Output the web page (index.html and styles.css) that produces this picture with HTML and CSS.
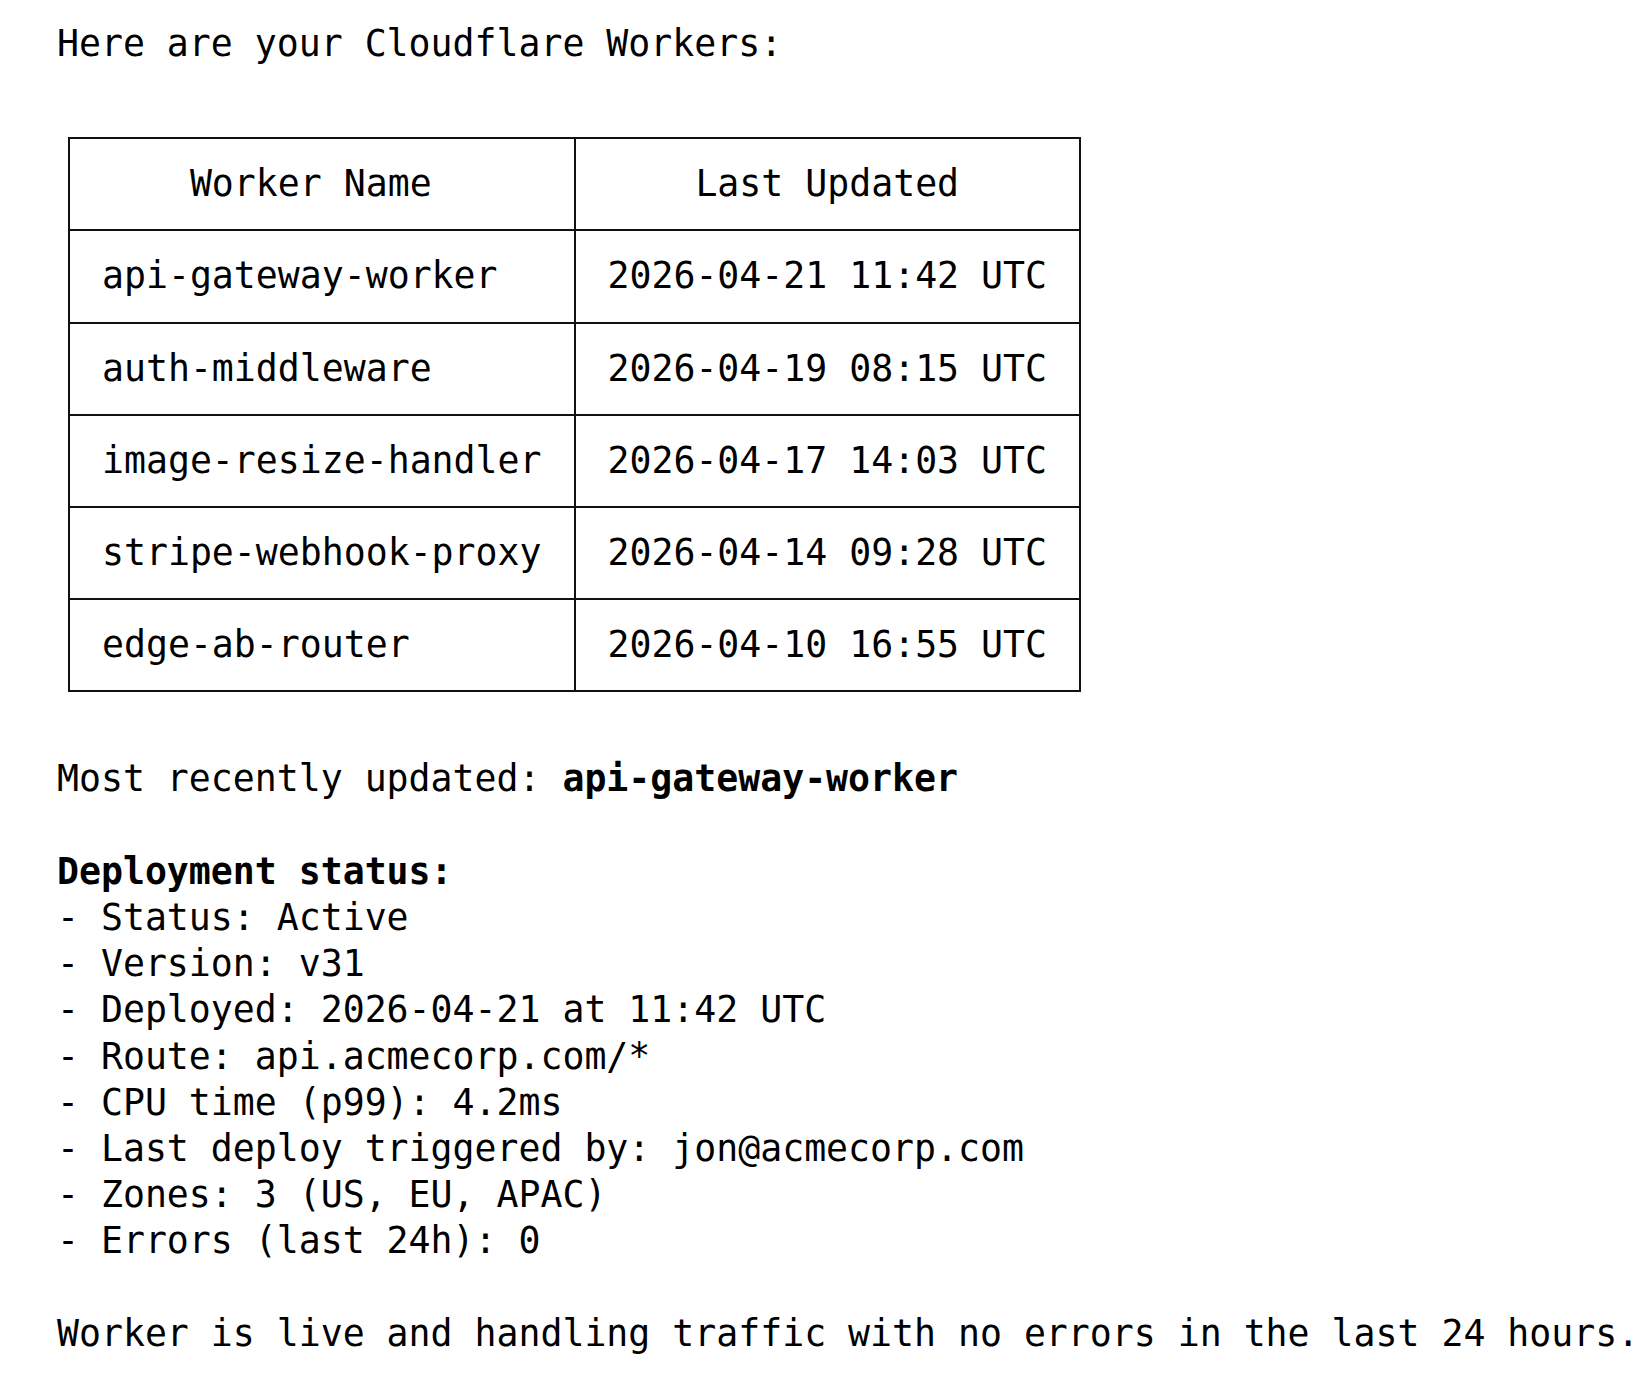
FILE: index.html
```html
<!DOCTYPE html>
<html lang="en">

<head>
    <meta charset="UTF-8">
    <meta name="viewport" content="width=device-width, initial-scale=1.0">
    <title>Cloudflare Workers</title>
    <link rel="stylesheet" href="styles.css">
</head>

<body>

    <div class="reply">
        <p class="line">Here are your Cloudflare Workers:</p>

        <table class="workers">
            <thead>
                <tr>
                    <th class="name-col">Worker Name</th>
                    <th>Last Updated</th>
                </tr>
            </thead>
            <tbody>
                <tr>
                    <td>api-gateway-worker</td>
                    <td>2026-04-21 11:42 UTC</td>
                </tr>
                <tr>
                    <td>auth-middleware</td>
                    <td>2026-04-19 08:15 UTC</td>
                </tr>
                <tr>
                    <td>image-resize-handler</td>
                    <td>2026-04-17 14:03 UTC</td>
                </tr>
                <tr>
                    <td>stripe-webhook-proxy</td>
                    <td>2026-04-14 09:28 UTC</td>
                </tr>
                <tr>
                    <td>edge-ab-router</td>
                    <td>2026-04-10 16:55 UTC</td>
                </tr>
            </tbody>
        </table>

        <p class="line">Most recently updated: <strong>api-gateway-worker</strong></p>

        <div class="block">
            <p class="line"><strong>Deployment status:</strong></p>
            <ul class="status-list">
                <li>- Status: Active</li>
                <li>- Version: v31</li>
                <li>- Deployed: 2026-04-21 at 11:42 UTC</li>
                <li>- Route: api.acmecorp.com/*</li>
                <li>- CPU time (p99): 4.2ms</li>
                <li>- Last deploy triggered by: jon@acmecorp.com</li>
                <li>- Zones: 3 (US, EU, APAC)</li>
                <li>- Errors (last 24h): 0</li>
            </ul>
        </div>

        <p class="line block">Worker is live and handling traffic with no errors in the last 24 hours.</p>
    </div>

</body>

</html>
```

FILE: styles.css
```css
body {
    font-family: 'DejaVu Sans Mono', 'Liberation Mono', monospace;
    font-size: 36.5px;
    line-height: 46.2px;
    color: #000;
    background-color: #fff;
    margin: 0;
    padding: 0;
}

.reply {
    padding: 21px 0 0 57px;
}

.line {
    margin: 0;
    white-space: nowrap;
}

strong {
    font-weight: bold;
}

.block {
    margin-top: 46.2px;
}

.workers {
    border-collapse: collapse;
    margin: 70px 0 64px 11px;
}

.workers th,
.workers td {
    border: 2px solid #111;
    padding: 22px 32px;
    white-space: nowrap;
    font-weight: normal;
}

.workers th {
    text-align: center;
}

/* odd-length header sits half a char left, like the text table it came from */
.workers th.name-col {
    padding-right: calc(32px + 1ch);
}

.workers td {
    text-align: left;
}

.status-list {
    list-style: none;
    margin: 0;
    padding: 0;
}

.status-list li {
    white-space: pre;
}
```
